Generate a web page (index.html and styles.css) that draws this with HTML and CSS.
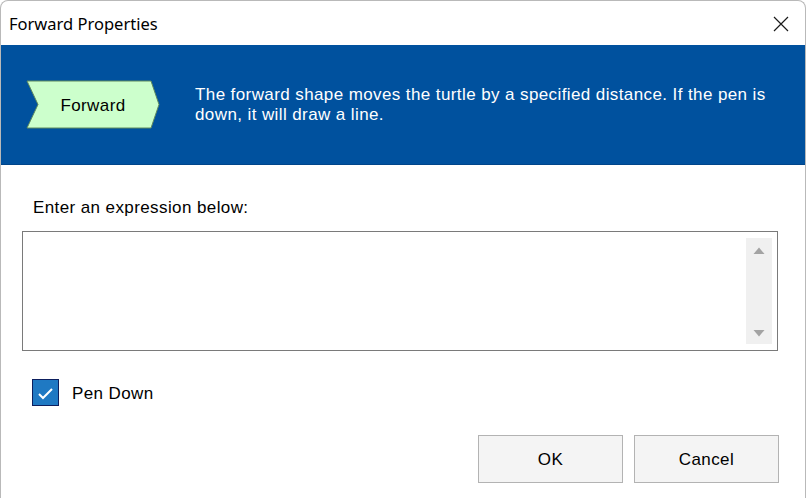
FILE: index.html
```html
<!DOCTYPE html>
<html>
<head>
<meta charset="utf-8">
<link rel="stylesheet" href="styles.css">
</head>
<body>
<div class="window">
  <div class="titlebar">
    <span class="title">Forward Properties</span>
    <svg class="close" width="16" height="16" viewBox="0 0 16 16"><path d="M1 1 L15 15 M15 1 L1 15" stroke="#1a1a1a" stroke-width="1.2" fill="none"/></svg>
  </div>
  <div class="banner">
    <svg class="shape" width="134" height="49" viewBox="0 0 134 49">
      <polygon points="1,1 125,1 133,24.5 125,48 1,48 12,24.5" fill="#ccffcc" stroke="#5f8a5f" stroke-width="1"/>
      <text x="67" y="30.5" text-anchor="middle" class="shape-text">Forward</text>
    </svg>
    <p class="desc">The forward shape moves the turtle by a specified distance. If the pen is down, it will draw a line.</p>
  </div>
  <div class="content">
    <div class="label">Enter an expression below:</div>
    <div class="textbox">
      <div class="scrollbar">
        <svg width="12" height="8" viewBox="0 0 12 8"><polygon points="6,0.5 11.5,7 0.5,7" fill="#a3a3a3"/></svg>
        <svg width="12" height="8" viewBox="0 0 12 8"><polygon points="0.5,1 11.5,1 6,7.5" fill="#a3a3a3"/></svg>
      </div>
    </div>
    <div class="check-row">
      <div class="checkbox">
        <svg width="27" height="27" viewBox="0 0 27 27"><path d="M7 15 L11 19 L20 10" stroke="#fff" stroke-width="2" fill="none"/></svg>
      </div>
      <span class="check-label">Pen Down</span>
    </div>
    <div class="buttons">
      <div class="btn">OK</div>
      <div class="btn">Cancel</div>
    </div>
  </div>
</div>
</body>
</html>
```
FILE: styles.css
```css
html, body {
  margin: 0;
  padding: 0;
  background: #ffffff;
}
.window {
  width: 806px;
  height: 498px;
  box-sizing: border-box;
  border: 1px solid #b9b9b9;
  border-bottom: none;
  border-radius: 8px 8px 0 0;
  overflow: hidden;
  background: #ffffff;
  font-family: "Liberation Sans", Arial, sans-serif;
  color: #000;
}
.titlebar {
  height: 44px;
  display: flex;
  align-items: center;
  justify-content: space-between;
  padding: 0 16px 0 8px;
}
.title {
  font-family: "Noto Sans", "Open Sans", sans-serif;
  font-size: 16.5px;
  color: #000;
  padding-top: 1px;
}
.close {
  display: block;
  margin-top: 1px;
}
.banner {
  height: 120px;
  box-sizing: border-box;
  background: #00519e;
  border-bottom: 1px solid #00458a;
  display: flex;
  align-items: flex-start;
  padding: 35px 0 0 25px;
}
.shape {
  display: block;
  flex: none;
}
.shape-text {
  font-family: "Liberation Sans", Arial, sans-serif;
  font-size: 17px;
  letter-spacing: 0.4px;
  fill: #000;
}
.desc {
  margin: 5px 0 0 35px;
  width: 595px;
  color: #ffffff;
  font-size: 17px;
  letter-spacing: 0.4px;
  line-height: 20px;
}
.content {
  padding: 33px 0 0 0;
  font-size: 17px;
  letter-spacing: 0.4px;
}
.label {
  line-height: 20px;
  margin-left: 32px;
  margin-bottom: 13px;
}
.textbox {
  margin-left: 21px;
  width: 756px;
  height: 120px;
  box-sizing: border-box;
  border: 1px solid #7a7a7a;
  display: flex;
  justify-content: flex-end;
  padding: 6px 5px 6px 0;
}
.scrollbar {
  width: 26px;
  background: #f0f0f0;
  display: flex;
  flex-direction: column;
  justify-content: space-between;
  align-items: center;
  padding: 9px 0 7px;
  box-sizing: border-box;
}
.scrollbar svg {
  display: block;
}
.check-row {
  display: flex;
  align-items: center;
  margin: 28px 0 0 31px;
}
.checkbox {
  width: 27px;
  height: 27px;
  box-sizing: border-box;
  border: 1px solid #0d1f5e;
  background: #1f79c3;
  position: relative;
}
.checkbox svg {
  position: absolute;
  left: -1px;
  top: -1px;
}
.check-label {
  margin-left: 13px;
  line-height: 20px;
  padding-top: 3px;
}
.buttons {
  display: flex;
  justify-content: flex-end;
  gap: 11px;
  margin-top: 29px;
  padding-right: 26px;
}
.btn {
  width: 145px;
  height: 48px;
  box-sizing: border-box;
  border: 1px solid #b3b3b3;
  background: #f4f4f4;
  display: flex;
  align-items: center;
  justify-content: center;
  padding-top: 2px;
}
```
